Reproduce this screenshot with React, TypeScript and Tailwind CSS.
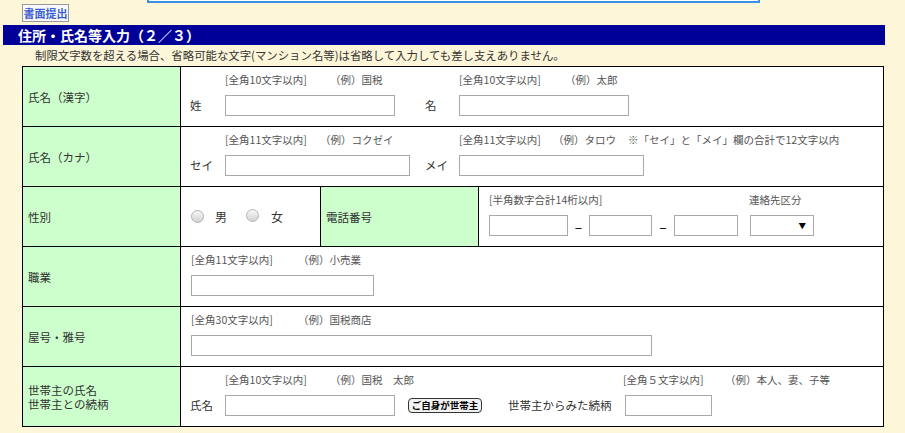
import React from 'react';

const Hint = ({ text, example, w }: { text: string; example?: string; w?: number }) => (
  <div className="flex h-[16px] items-center text-[10.5px] leading-[16px] text-[#555]">
    <span style={w ? { width: w } : undefined} className="shrink-0 whitespace-nowrap">{text}</span>
    {example && <span className="whitespace-nowrap">{example}</span>}
  </div>
);

const TextBox = ({ w }: { w: number }) => (
  <input
    type="text"
    style={{ width: w }}
    className="h-[21px] border border-[#a9a9a9] bg-white px-1 text-[12px] outline-none"
  />
);

const Radio = () => (
  <span className="inline-block h-[13px] w-[13px] rounded-full border border-[#b5b5b5] bg-linear-to-b from-[#f7f7f7] to-[#d3d3d3]" />
);

const labelCell = 'bg-[#ccffcc] border border-black pl-[5px] align-middle text-[11.5px] leading-[14px] text-[#333]';
const bodyCell = 'border border-black bg-white align-top pl-[10px] pt-[5px] text-[11.5px] text-[#333]';

export default function App() {
  return (
    <div className="min-h-[433px] w-[905px] overflow-hidden bg-[#fdf6d9] font-['Noto_Sans_CJK_JP','Noto_Sans',sans-serif] text-[#333]">
      <div className="ml-[147px] h-[3px] w-[613px] border-x-2 border-b-2 border-[#3b8fe5] bg-white" />

      <div className="mt-[1px] flex pl-[22px]">
        <button className="flex h-[18px] w-[47px] items-center justify-center border border-[#9a9a9a] bg-[#f8f8f8] text-[11px] font-bold leading-none text-[#3c5fd0]">
          書面提出
        </button>
      </div>

      <div className="ml-[3px] mt-[3px] flex h-[20px] w-[882px] items-center bg-[#000099] pl-[15px] text-[14px] font-bold text-white">
        住所・氏名等入力（２／３）
      </div>

      <p className="flex h-[21px] items-center pl-[35px] text-[11.4px] text-[#333]">
        制限文字数を超える場合、省略可能な文字(マンション名等)は省略して入力しても差し支えありません。
      </p>

      <table className="ml-[22px] w-[862px] table-fixed border-collapse">
        <colgroup>
          <col className="w-[158px]" />
          <col className="w-[140px]" />
          <col className="w-[158px]" />
          <col />
        </colgroup>
        <tbody>
          <tr className="h-[60px]">
            <td className={labelCell}>氏名（漢字）</td>
            <td colSpan={3} className={bodyCell}>
              <div className="-ml-[1px] grid grid-cols-[35px_200px_34px_1fr] items-center">
                <span />
                <Hint text="[全角10文字以内]" example="（例）国税" w={105} />
                <span />
                <Hint text="[全角10文字以内]" example="（例）太郎" w={106} />
                <span className="mt-[7px]">姓</span>
                <div className="mt-[7px]"><TextBox w={170} /></div>
                <span className="mt-[7px]">名</span>
                <div className="mt-[7px]"><TextBox w={170} /></div>
              </div>
            </td>
          </tr>

          <tr className="h-[60px]">
            <td className={labelCell}>氏名（カナ）</td>
            <td colSpan={3} className={bodyCell}>
              <div className="-ml-[1px] grid grid-cols-[35px_200px_34px_1fr] items-center">
                <span />
                <Hint text="[全角11文字以内]" example="（例）コクゼイ" w={95} />
                <span />
                <div className="flex items-center">
                  <Hint text="[全角11文字以内]" example="（例）タロウ" w={94} />
                  <span className="ml-[12px] whitespace-nowrap text-[10.5px] text-[#555]">※「セイ」と「メイ」欄の合計で12文字以内</span>
                </div>
                <span className="mt-[7px]">セイ</span>
                <div className="mt-[7px]"><TextBox w={185} /></div>
                <span className="mt-[7px]">メイ</span>
                <div className="mt-[7px]"><TextBox w={185} /></div>
              </div>
            </td>
          </tr>

          <tr className="h-[60px]">
            <td className={labelCell}>性別</td>
            <td className="border border-black bg-white pl-[10px] align-middle text-[12px] text-[#333]">
              <div className="flex items-center">
                <Radio />
                <span className="ml-[11px]">男</span>
                <span className="ml-[19px]"><Radio /></span>
                <span className="ml-[12px]">女</span>
              </div>
            </td>
            <td className={labelCell}>電話番号</td>
            <td className={bodyCell}>
              <div className="flex h-[16px] items-center text-[10.5px] text-[#555]">
                <span className="w-[260px]">[半角数字合計14桁以内]</span>
                <span>連絡先区分</span>
              </div>
              <div className="mt-[7px] flex items-center">
                <TextBox w={79} />
                <span className="w-[21px] text-center text-[14px] leading-none text-black">–</span>
                <TextBox w={63} />
                <span className="w-[22px] text-center text-[14px] leading-none text-black">–</span>
                <TextBox w={64} />
                <div className="ml-[12px] flex h-[21px] w-[64px] items-center justify-end border border-[#a9a9a9] bg-white pr-[7px] text-[7.5px] text-black">
                  ▼
                </div>
              </div>
            </td>
          </tr>

          <tr className="h-[60px]">
            <td className={labelCell}>職業</td>
            <td colSpan={3} className={bodyCell}>
              <Hint text="[全角11文字以内]" example="（例）小売業" w={107} />
              <div className="mt-[7px]"><TextBox w={183} /></div>
            </td>
          </tr>

          <tr className="h-[60px]">
            <td className={labelCell}>屋号・雅号</td>
            <td colSpan={3} className={bodyCell}>
              <Hint text="[全角30文字以内]" example="（例）国税商店" w={107} />
              <div className="mt-[7px]"><TextBox w={461} /></div>
            </td>
          </tr>

          <tr className="h-[60px]">
            <td className={labelCell}>
              世帯主の氏名
              <br />
              世帯主との続柄
            </td>
            <td colSpan={3} className={bodyCell}>
              <div className="-ml-[1px] grid grid-cols-[35px_183px_100px_117px_1fr] items-center">
                <span />
                <div className="col-span-3">
                  <Hint text="[全角10文字以内]" example="（例）国税　太郎" w={105} />
                </div>
                <div className="-ml-[2px]">
                  <Hint text="[全角５文字以内]" example="（例）本人、妻、子等" w={102} />
                </div>
                <span className="mt-[7px]">氏名</span>
                <div className="mt-[7px]"><TextBox w={170} /></div>
                <div className="mt-[7px]">
                  <button className="flex h-[15px] w-[74px] items-center justify-center rounded-[4px] border border-[#333] bg-[#f2f2f2] text-[9.5px] font-bold leading-none text-black">
                    ご自身が世帯主
                  </button>
                </div>
                <span className="mt-[7px] whitespace-nowrap">世帯主からみた続柄</span>
                <div className="mt-[7px]"><TextBox w={87} /></div>
              </div>
            </td>
          </tr>
        </tbody>
      </table>
    </div>
  );
}
